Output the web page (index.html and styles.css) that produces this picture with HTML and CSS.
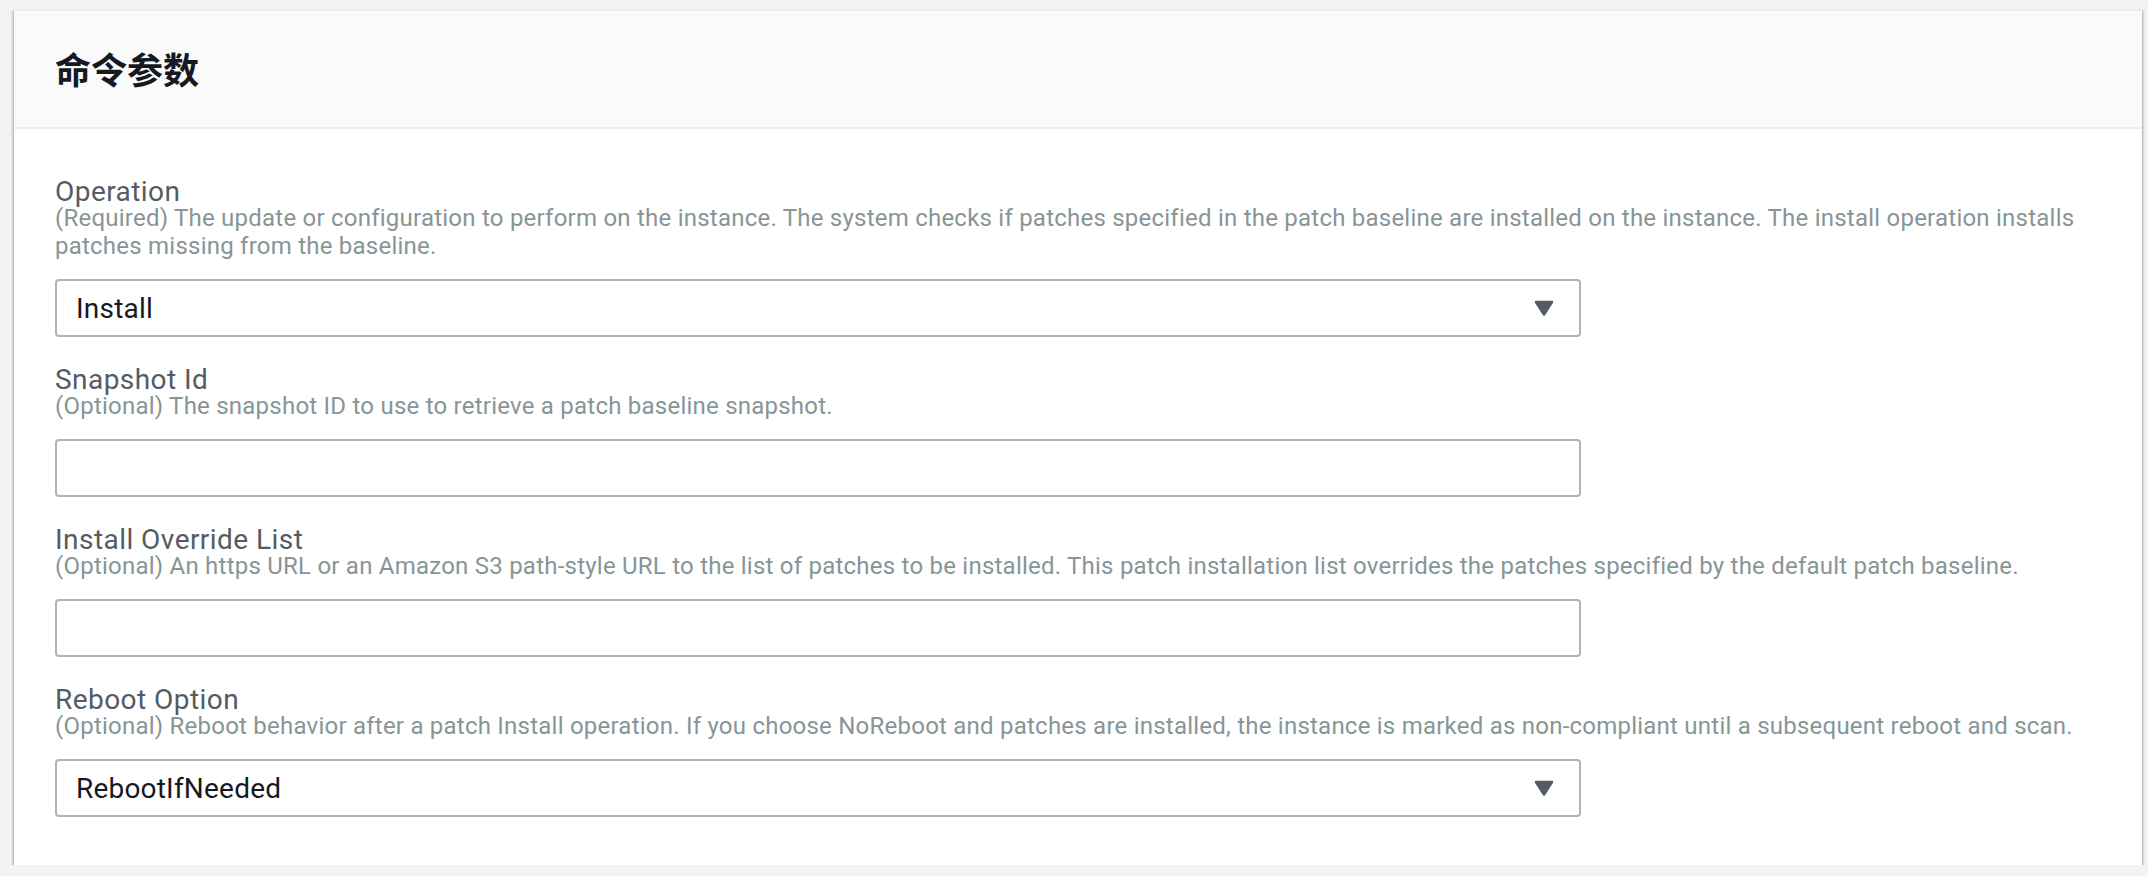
FILE: index.html
```html
<!DOCTYPE html>
<html lang="zh">
<head>
<meta charset="utf-8">
<title>命令参数</title>
<link rel="stylesheet" href="styles.css">
</head>
<body>
<div class="page">
  <section class="card">
    <header class="card-header">
      <h2 class="card-title">命令参数</h2>
    </header>
    <div class="card-body">
      <div class="field">
        <label class="field-label">Operation</label>
        <p class="field-desc">(Required) The update or configuration to perform on the instance. The system checks if patches specified in the patch baseline are installed on the instance. The install operation installs patches missing from the baseline.</p>
        <div class="control select">
          <span class="select-value">Install</span>
          <svg class="select-arrow" width="20" height="16" viewBox="0 0 20 16"><path d="M2 2 L18 2 L10 14.5 Z" fill="#545b64" stroke="#545b64" stroke-width="2.5" stroke-linejoin="round"/></svg>
        </div>
      </div>
      <div class="field">
        <label class="field-label">Snapshot Id</label>
        <p class="field-desc">(Optional) The snapshot ID to use to retrieve a patch baseline snapshot.</p>
        <input class="control input" type="text">
      </div>
      <div class="field">
        <label class="field-label">Install Override List</label>
        <p class="field-desc">(Optional) An https URL or an Amazon S3 path-style URL to the list of patches to be installed. This patch installation list overrides the patches specified by the default patch baseline.</p>
        <input class="control input" type="text">
      </div>
      <div class="field">
        <label class="field-label">Reboot Option</label>
        <p class="field-desc">(Optional) Reboot behavior after a patch Install operation. If you choose NoReboot and patches are installed, the instance is marked as non-compliant until a subsequent reboot and scan.</p>
        <div class="control select">
          <span class="select-value">RebootIfNeeded</span>
          <svg class="select-arrow" width="20" height="16" viewBox="0 0 20 16"><path d="M2 2 L18 2 L10 14.5 Z" fill="#545b64" stroke="#545b64" stroke-width="2.5" stroke-linejoin="round"/></svg>
        </div>
      </div>
    </div>
  </section>
</div>
</body>
</html>
```

FILE: styles.css
```css
html, body {
  margin: 0;
  padding: 0;
  background: #f2f3f3;
}

.page {
  padding: 9px 6px 0 14px;
}

.card {
  background: #ffffff;
  border-top: 2px solid #eaeded;
  box-shadow: 0 2px 2px 0 rgba(0, 28, 36, 0.3),
              2px 2px 2px 0 rgba(0, 28, 36, 0.15),
              -2px 2px 2px 0 rgba(0, 28, 36, 0.15);
}

.card-header {
  background: #fafafa;
  border-bottom: 2px solid #eaeded;
  padding: 35px 41px 37px;
}

.card-title {
  margin: 0;
  font-family: "Noto Sans CJK SC", sans-serif;
  font-weight: 700;
  font-size: 36px;
  line-height: 44px;
  color: #16191f;
}

.card-body {
  padding: 51px 41px 48px;
}

.field + .field {
  margin-top: 31px;
}

.field-label {
  display: block;
  font-family: Roboto, "Noto Sans", sans-serif;
  font-size: 28px;
  line-height: 24px;
  letter-spacing: 0.45px;
  color: #545b64;
}

.field-desc {
  margin: 0;
  font-family: Roboto, "Noto Sans", sans-serif;
  font-size: 24px;
  line-height: 28px;
  letter-spacing: 0.23px;
  color: #879596;
}

.control {
  display: flex;
  align-items: center;
  justify-content: space-between;
  box-sizing: border-box;
  width: 1526px;
  height: 58px;
  margin-top: 19px;
  border: 2px solid #aab7b8;
  border-radius: 4px;
  background: #ffffff;
  padding: 0 25px 0 19px;
  font-family: Roboto, "Noto Sans", sans-serif;
  font-size: 28px;
  letter-spacing: 0.2px;
  color: #16191f;
}

.input {
  outline: none;
}

.select-arrow {
  display: block;
  flex: none;
}
```
